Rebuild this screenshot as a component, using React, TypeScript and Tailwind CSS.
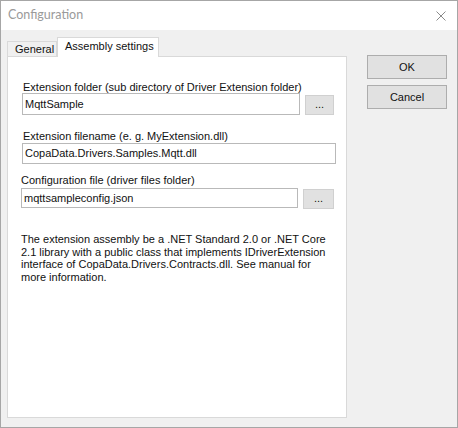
import React from "react";

const font = { fontFamily: '"Liberation Sans", Arial, sans-serif' };

export default function App() {
  return (
    <div
      className="w-[458px] h-[428px] border border-[#a6a6a6] bg-[#f0f0f0] flex flex-col text-[11px] text-[#111]"
      style={font}
    >
      {/* Title bar */}
      <div className="h-[29px] bg-white flex items-center justify-between shrink-0">
        <span
          className="pl-[7px] text-[12.5px] text-[#9a9a9a] leading-none"
          style={{ fontFamily: 'Lato, "Noto Sans", sans-serif' }}
        >
          Configuration
        </span>
        <svg width="10" height="10" viewBox="0 0 10 10" className="mr-[11px]">
          <path d="M0.5 0.5 L9.5 9.5 M9.5 0.5 L0.5 9.5" stroke="#8a8a8a" strokeWidth="1" />
        </svg>
      </div>

      {/* Body */}
      <div className="flex flex-1">
        {/* Left: tabs + panel */}
        <div className="ml-[6px] pt-[7px] w-[340px] flex flex-col">
          <div className="flex items-end h-[19px]">
            <div className="h-[15px] w-[50px] border border-b-0 border-[#d9d9d9] bg-[#f0f0f0] pl-[7px] flex items-center leading-none">
              General
            </div>
            <div className="relative z-10 h-[20px] w-[102px] -mb-px border border-b-0 border-[#d9d9d9] bg-white pl-[7px] pb-[3px] flex items-center leading-none">
              Assembly settings
            </div>
          </div>
          <div className="h-[362px] border border-[#d9d9d9] bg-white pl-[14px] flex flex-col">
            <div className="mt-[24px] pl-px h-[12px] leading-[12px]">
              Extension folder (sub directory of Driver Extension folder)
            </div>
            <div className="flex items-end">
              <div className="w-[278px] h-[22px] border border-[#b9b9b9] pl-[2px] flex items-center">
                MqttSample
              </div>
              <div className="ml-[5px] w-[29px] h-[20px] border border-[#d0d0d0] bg-[#e1e1e1] flex items-center justify-center pb-[2px]">
                ...
              </div>
            </div>
            <div className="mt-[15px] pl-px h-[12px] leading-[12px]">
              Extension filename (e. g. MyExtension.dll)
            </div>
            <div className="mt-px w-[314px] h-[21px] border border-[#b9b9b9] pl-[2px] flex items-center">
              CopaData.Drivers.Samples.Mqtt.dll
            </div>
            <div className="mt-[10px] h-[12px] leading-[12px] -ml-px">
              Configuration file (driver files folder)
            </div>
            <div className="mt-[2px] flex items-start -ml-px">
              <div className="w-[277px] h-[20px] border border-[#b9b9b9] pl-[2px] flex items-center">
                mqttsampleconfig.json
              </div>
              <div className="ml-[5px] mt-px w-[31px] h-[20px] border border-[#d0d0d0] bg-[#e1e1e1] flex items-center justify-center pb-[2px]">
                ...
              </div>
            </div>
            <p className="mt-[24px] -ml-px leading-[12.7px] whitespace-nowrap">
              The extension assembly be a .NET Standard 2.0 or .NET Core
              <br />
              2.1 library with a public class that implements IDriverExtension
              <br />
              interface of CopaData.Drivers.Contracts.dll. See manual for
              <br />
              more information.
            </p>
          </div>
        </div>

        {/* Right: buttons */}
        <div className="ml-[20px] pt-[25px] flex flex-col gap-[6px]">
          <div className="w-[80px] h-[24px] border border-[#adadad] bg-[#e1e1e1] flex items-center justify-center">
            OK
          </div>
          <div className="w-[80px] h-[24px] border border-[#adadad] bg-[#e1e1e1] flex items-center justify-center">
            Cancel
          </div>
        </div>
      </div>
    </div>
  );
}
